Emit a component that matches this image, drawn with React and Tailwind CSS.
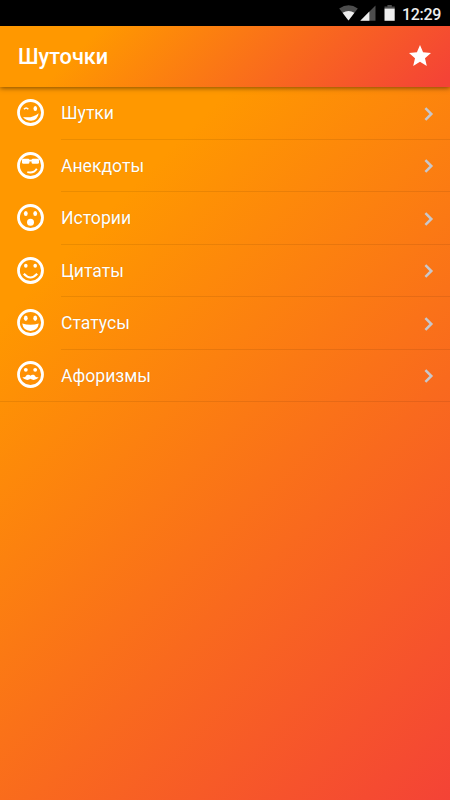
import React from 'react';

const Face = ({ children }) => (
  <svg width="27" height="27" viewBox="0 0 27 27" fill="white" className="-mt-px shrink-0">
    <circle cx="13.5" cy="13.5" r="12" fill="none" stroke="white" strokeWidth="2.8" />
    {children}
  </svg>
);

const Wink = () => (
  <Face>
    <path d="M7 10.2 Q9.2 7.6 11.3 10.2" fill="none" stroke="white" strokeWidth="1.5" />
    <ellipse cx="18.3" cy="9.5" rx="1.8" ry="2.6" />
    <path d="M6 18 Q15.5 19.6 21.7 14.2 Q20.5 21.6 14 21.8 Q9 21.8 6 18 Z" />
  </Face>
);

const Cool = () => (
  <Face>
    <rect x="5" y="6.7" width="7.4" height="5.1" rx="1.4" />
    <rect x="14.6" y="6.7" width="7.4" height="5.1" rx="1.4" />
    <rect x="11" y="7.7" width="5" height="1.8" />
    <path d="M10.3 20.1 Q16.8 21.6 19.8 16.7" fill="none" stroke="white" strokeWidth="1.9" />
  </Face>
);

const Surprised = () => (
  <Face>
    <ellipse cx="8.8" cy="9.5" rx="1.9" ry="2.6" />
    <ellipse cx="18.2" cy="9.5" rx="1.9" ry="2.6" />
    <circle cx="13.5" cy="18.3" r="3.5" />
  </Face>
);

const Smile = () => (
  <Face>
    <ellipse cx="8.8" cy="8.8" rx="1.8" ry="2" />
    <ellipse cx="18.2" cy="8.8" rx="1.8" ry="2" />
    <path d="M6.8 16.8 Q13.5 24.2 20.2 16.8" fill="none" stroke="white" strokeWidth="2.1" />
  </Face>
);

const Laugh = () => (
  <Face>
    <ellipse cx="8.8" cy="9.2" rx="1.9" ry="2.7" />
    <ellipse cx="18.2" cy="9.2" rx="1.9" ry="2.7" />
    <path d="M5.2 14.5 Q13.5 17 21.8 14.5 Q20.8 21.7 13.5 21.9 Q6.2 21.7 5.2 14.5 Z" />
  </Face>
);

const Mustache = () => (
  <Face>
    <circle cx="8.8" cy="8.8" r="1.9" />
    <circle cx="18.2" cy="8.8" r="1.9" />
    <path d="M13.5 14.8 C15 13.2 17.2 13.8 18.2 15.2 C19 16.4 20.2 16.5 21.6 16.1 C20.2 19 15.8 19.8 13.5 17.8 C11.2 19.8 6.8 19 5.4 16.1 C6.8 16.5 8 16.4 8.8 15.2 C9.8 13.8 12 13.2 13.5 14.8 Z" />
  </Face>
);

const items = [
  { title: 'Шутки', Icon: Wink },
  { title: 'Анекдоты', Icon: Cool },
  { title: 'Истории', Icon: Surprised },
  { title: 'Цитаты', Icon: Smile },
  { title: 'Статусы', Icon: Laugh },
  { title: 'Афоризмы', Icon: Mustache },
];

function StatusBar() {
  return (
    <div className="flex h-[26px] shrink-0 items-center bg-black pr-[9px] text-[#eeeeee]">
      <svg width="20" height="26" viewBox="0 0 20 26" className="ml-auto">
        <path d="M0.2 8.5 Q9.8 1.8 18.8 8.5 L9.5 20.5 Z" fill="#4d4d4d" />
        <path d="M3.6 12.8 Q9.6 9 15.4 12.8 L9.5 20.5 Z" fill="#eeeeee" />
      </svg>
      <svg width="16" height="26" viewBox="0 0 16 26" className="ml-px">
        <path d="M15.5 5.5 V20.7 H0.3 Z" fill="#4d4d4d" />
        <path d="M9.4 11.6 V20.7 H0.3 Z" fill="#eeeeee" />
      </svg>
      <svg width="12" height="26" viewBox="0 0 12 26" className="ml-[8px]">
        <path d="M0.5 8.5 V6.6 H3.4 V5 H7.8 V6.6 H10.7 V8.5 Z" fill="#4d4d4d" />
        <path d="M0.5 8.5 H10.7 V20.8 H0.5 Z" fill="#eeeeee" />
      </svg>
      <span className="ml-[6px] mt-[3px] text-[16px] font-medium leading-none tracking-[-0.3px]">12:29</span>
    </div>
  );
}

function App() {
  return (
    <div className="flex h-[800px] w-[450px] flex-col overflow-hidden font-['Roboto','Noto_Sans',sans-serif] text-white">
      <StatusBar />
      <header className="z-10 flex h-[61px] shrink-0 items-center justify-between bg-[linear-gradient(135deg,#ff9800_20%,#f44336_98%)] pl-[18px] pr-[19px] shadow-[0_1px_5px_rgba(0,0,0,0.5)]">
        <h1 className="pt-px text-[21.7px] font-medium">Шуточки</h1>
        <svg width="22" height="22" viewBox="2 2 20 20" fill="white" className="-mt-px">
          <path d="M12 17.27 18.18 21l-1.64-7.03L22 9.24l-7.19-.61L12 2 9.19 8.63 2 9.24l5.46 4.73L5.82 21z" />
        </svg>
      </header>
      <main className="flex-1 bg-[linear-gradient(135deg,#ff9800_20%,#f44336_100%)]">
        <ul>
          {items.map(({ title, Icon }) => (
            <li
              key={title}
              className="group flex h-[52.5px] items-center pl-[17px] last:border-b last:border-black/8"
            >
              <Icon />
              <div className="ml-[17px] flex h-full flex-1 items-center justify-between border-b border-black/8 pr-[16px] group-last:border-b-0">
                <span className="pt-px text-[17.6px] [text-shadow:0_0_1px_rgba(0,0,0,0.2)]">{title}</span>
                <svg width="10" height="14" viewBox="0 0 10 14" className="mt-[1.5px]">
                  <path d="M1.4 1.2 L7.3 7 L1.4 12.8" fill="none" stroke="#c7c7cc" strokeWidth="2.5" />
                </svg>
              </div>
            </li>
          ))}
        </ul>
      </main>
    </div>
  );
}

export default App;
